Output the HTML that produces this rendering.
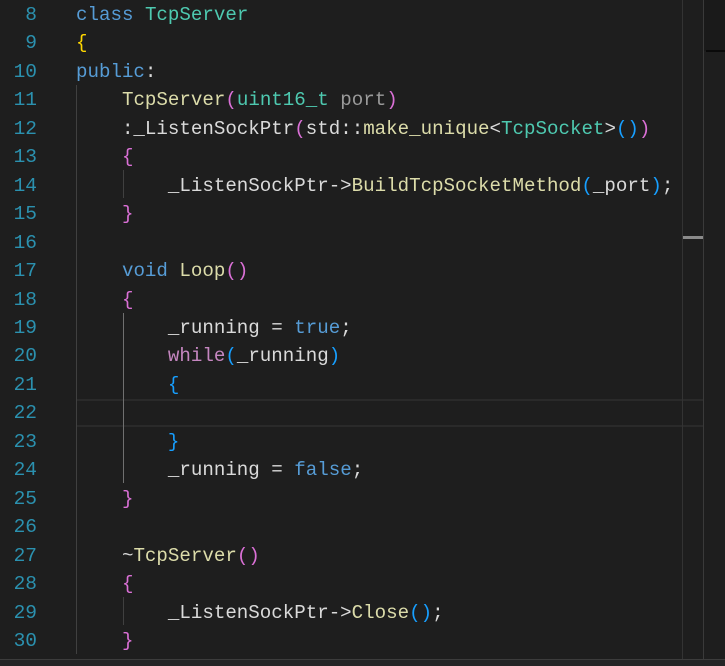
<!DOCTYPE html>
<html><head><style>
html,body{margin:0;padding:0;background:#1e1e1e;width:725px;height:665px;overflow:hidden}
.ln{position:absolute;left:0;width:37px;text-align:right;color:#2b91af;font:19.5px/28.45px "Liberation Mono",monospace}
.code{position:absolute;left:76px;top:1px;font:19.15px/28.45px "Liberation Mono",monospace;color:#dadada;white-space:pre}
.k{color:#569cd6}.t{color:#4ec9b0}.f{color:#dcdcaa}.g{color:#9a9a9a}
.y{color:#ffd700}.p{color:#da70d6}.b{color:#179fff}
.guide{position:absolute;width:1px;background:#404040}
</style></head><body>
<div style="position:absolute;left:76px;top:399px;width:627px;height:24px;border-top:2px solid #2a2a2a;border-bottom:2px solid #2a2a2a"></div>
<div class="guide" style="left:76px;top:85px;height:569px"></div>
<div class="guide" style="left:123px;top:170px;height:28px"></div>
<div class="guide" style="left:123px;top:313px;height:170px;background:#707070"></div>
<div class="guide" style="left:123px;top:597px;height:28px"></div>
<div style="position:absolute;left:682px;top:0;width:1px;height:659px;background:#333"></div>
<div style="position:absolute;left:703px;top:0;width:1px;height:659px;background:#3a3a3a"></div>
<div style="position:absolute;left:704px;top:0;width:21px;height:51px;background:#1a1a1a"></div>
<div style="position:absolute;left:706px;top:50px;width:19px;height:2px;background:#0a0a0a"></div>
<div style="position:absolute;left:683px;top:236px;width:20px;height:3px;background:#8a8a8a"></div>
<div style="position:absolute;left:0;top:659px;width:725px;height:6px;background:#252526;border-top:1px solid #3c3c3c"></div>
<div class="ln" style="top:1px">8<br>9<br>10<br>11<br>12<br>13<br>14<br>15<br>16<br>17<br>18<br>19<br>20<br>21<br>22<br>23<br>24<br>25<br>26<br>27<br>28<br>29<br>30</div>
<div class="code"><span class="k">class</span> <span class="t">TcpServer</span>
<span class="y">{</span>
<span class="k">public</span>:
    <span class="f">TcpServer</span><span class="p">(</span><span class="t">uint16_t</span> <span class="g">port</span><span class="p">)</span>
    :_ListenSockPtr<span class="p">(</span>std::<span class="f">make_unique</span>&lt;<span class="t">TcpSocket</span>&gt;<span class="b">()</span><span class="p">)</span>
    <span class="p">{</span>
        _ListenSockPtr-&gt;<span class="f">BuildTcpSocketMethod</span><span class="b">(</span>_port<span class="b">)</span>;
    <span class="p">}</span>

    <span class="k">void</span> <span class="f">Loop</span><span class="p">()</span>
    <span class="p">{</span>
        _running = <span class="k">true</span>;
        <span class="k" style="color:#c586c0">while</span><span class="b">(</span>_running<span class="b">)</span>
        <span class="b">{</span>

        <span class="b">}</span>
        _running = <span class="k">false</span>;
    <span class="p">}</span>

    ~<span class="f">TcpServer</span><span class="p">()</span>
    <span class="p">{</span>
        _ListenSockPtr-&gt;<span class="f">Close</span><span class="b">()</span>;
    <span class="p">}</span></div>
</body></html>
